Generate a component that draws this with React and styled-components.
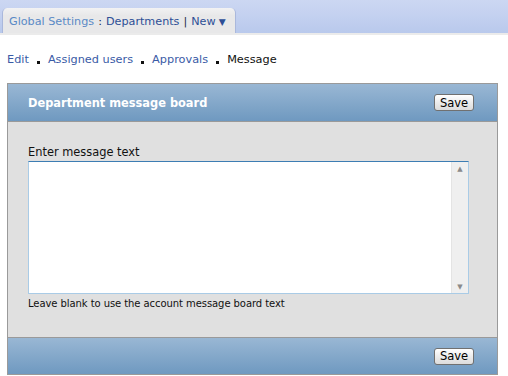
import React from 'react';
import styled, { createGlobalStyle } from 'styled-components';

const GlobalStyle = createGlobalStyle`
  html, body {
    margin: 0;
    padding: 0;
    background: #ffffff;
    font-family: 'DejaVu Sans', Verdana, sans-serif;
  }
`;

const App = () => {
  return (
    <Page>
      <GlobalStyle />
      <TopBar>
        <Tab>
          <Crumb $light>Global Settings</Crumb>
          <Sep>:</Sep>
          <Crumb>Departments</Crumb>
          <Sep>|</Sep>
          <Crumb>New</Crumb>
          <Arrow>▼</Arrow>
        </Tab>
      </TopBar>
      <TopRule />
      <SubNav>
        <NavLink>Edit</NavLink>
        <Dot />
        <NavLink>Assigned users</NavLink>
        <Dot />
        <NavLink>Approvals</NavLink>
        <Dot />
        <NavCurrent>Message</NavCurrent>
      </SubNav>
      <Panel>
        <PanelBar $head>
          <PanelTitle>Department message board</PanelTitle>
          <SaveButton>Save</SaveButton>
        </PanelBar>
        <PanelBody>
          <FieldLabel>Enter message text</FieldLabel>
          <TextBox>
            <MessageInput />
            <ScrollTrack>
              <ScrollArrow>▲</ScrollArrow>
              <ScrollArrow>▼</ScrollArrow>
            </ScrollTrack>
          </TextBox>
          <Hint>Leave blank to use the account message board text</Hint>
        </PanelBody>
        <PanelBar>
          <span />
          <SaveButton>Save</SaveButton>
        </PanelBar>
      </Panel>
    </Page>
  );
};

export default App;

const Page = styled.div`
  width: 508px;
  height: 376px;
  overflow: hidden;
`;

const TopBar = styled.div`
  height: 33px;
  display: flex;
  align-items: flex-end;
  padding-left: 2px;
  background: linear-gradient(#ccd7f2, #c4d1f0 45%, #b9c9ec);
`;

const Tab = styled.div`
  height: 25px;
  width: 234px;
  box-sizing: border-box;
  display: flex;
  align-items: center;
  white-space: nowrap;
  padding: 2px 0 0 6px;
  background: linear-gradient(#f2f2f3, #e8e8e9 30%);
  border-left: 1px solid #aab8dc;
  border-right: 1px solid #aab8dc;
  border-radius: 5px 5px 0 0;
  font-size: 11.2px;
`;

const Crumb = styled.span`
  color: ${(p) => (p.$light ? '#5a8ac6' : '#2d4f96')};
`;

const Sep = styled.span`
  color: #1a2a4a;
  margin: 0 4px;
`;

const Arrow = styled.span`
  color: #2d4f96;
  font-size: 9px;
  margin-left: 3px;
`;

const TopRule = styled.div`
  height: 2px;
  background: #ebebeb;
`;

const SubNav = styled.div`
  display: flex;
  align-items: center;
  padding: 16px 0 0 7px;
  height: 16px;
  font-size: 11.3px;
`;

const NavLink = styled.span`
  color: #3a5ba6;
`;

const NavCurrent = styled.span`
  color: #111111;
`;

const Dot = styled.span`
  width: 3px;
  height: 3px;
  background: #111111;
  margin: 6px 8px 0 8px;
`;

const Panel = styled.div`
  margin: 16px 0 0 7px;
  width: 489px;
  border: 1px solid #9a9a9a;
  background: #e0e0e0;
`;

const PanelBar = styled.div`
  height: ${(p) => (p.$head ? '37px' : '36px')};
  display: flex;
  align-items: center;
  justify-content: space-between;
  padding: 0 23px 0 20px;
  background: linear-gradient(#99b7d4, #6f99c0);
  border-top: ${(p) => (p.$head ? 'none' : '1px solid #9a9a9a')};
  border-bottom: ${(p) => (p.$head ? '1px solid #9a9a9a' : 'none')};
`;

const PanelTitle = styled.span`
  color: #ffffff;
  font-weight: bold;
  font-size: 11.4px;
`;

const SaveButton = styled.button`
  width: 40px;
  height: 17px;
  padding: 0;
  font-family: 'DejaVu Sans', Verdana, sans-serif;
  font-size: 11.5px;
  color: #000000;
  border: 1px solid #707070;
  border-radius: 3px;
  background: linear-gradient(#ffffff, #ececec 50%, #dcdcdc);
`;

const PanelBody = styled.div`
  padding: 23px 0 0 20px;
  height: 215px;
  box-sizing: border-box;
`;

const FieldLabel = styled.div`
  font-size: 11.4px;
  color: #111111;
  line-height: 14px;
  margin-bottom: 2px;
`;

const TextBox = styled.div`
  width: 441px;
  height: 133px;
  box-sizing: border-box;
  display: flex;
  background: #ffffff;
  border: 1px solid #a9cbe6;
  border-top-color: #3d7db3;
`;

const MessageInput = styled.textarea`
  flex: 1;
  border: none;
  outline: none;
  resize: none;
  overflow: hidden;
  background: transparent;
`;

const ScrollTrack = styled.div`
  width: 16px;
  display: flex;
  flex-direction: column;
  justify-content: space-between;
  align-items: center;
  padding: 3px 0 2px;
  background: #efefef;
  border-left: 1px solid #e4e4e4;
`;

const ScrollArrow = styled.span`
  font-size: 7px;
  color: #8a8a8a;
`;

const Hint = styled.div`
  margin-top: 4px;
  font-size: 10px;
  color: #111111;
  letter-spacing: -0.07px;
`;
